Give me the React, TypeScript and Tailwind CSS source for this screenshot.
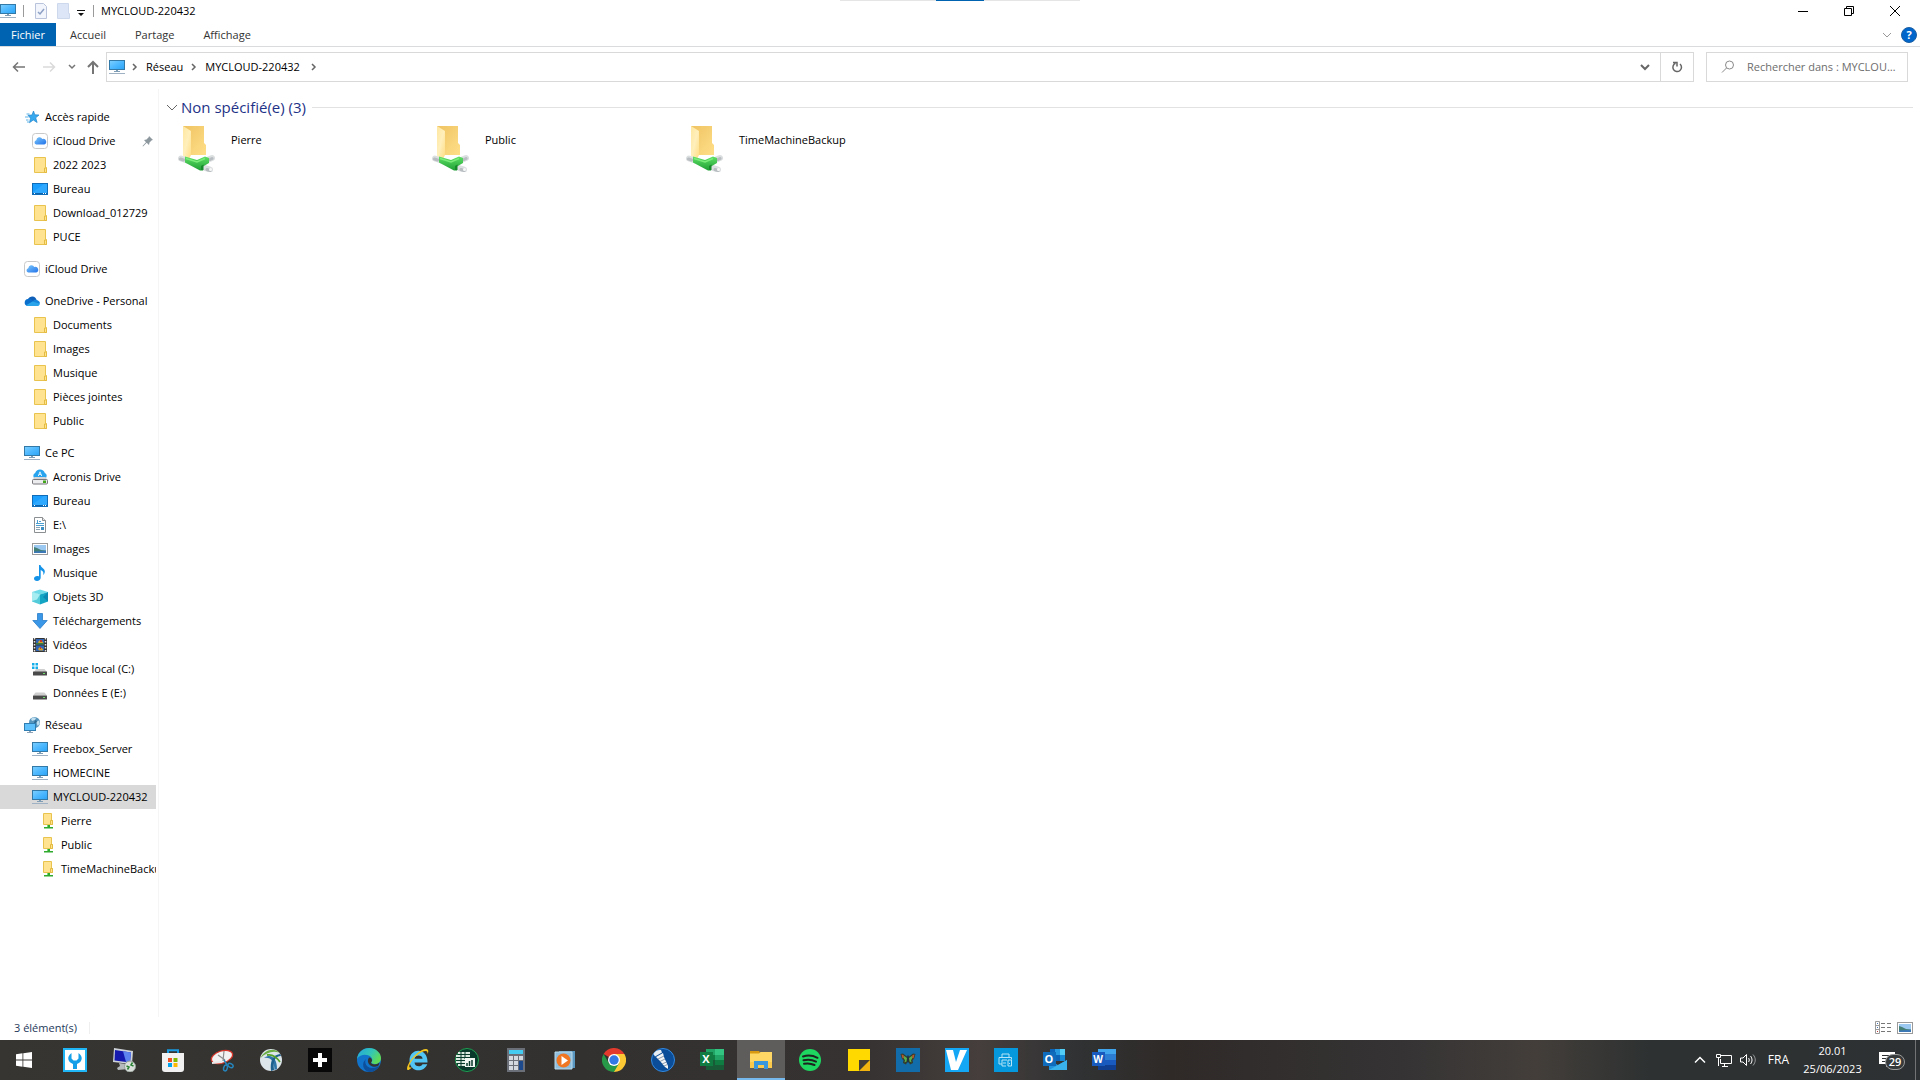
import React from 'react';

type IconProps = { className?: string };

/* ---------- Navigation pane icons ---------- */

const MonitorIcon = ({ className = 'w-4 h-4' }: IconProps) => (
  <svg className={className} viewBox="0 0 16 16" aria-hidden="true">
    <defs>
      <linearGradient id="screen" x1="0" y1="0" x2="1" y2="1">
        <stop offset="0" stopColor="#7fd0ff" />
        <stop offset=".5" stopColor="#4db8ff" />
        <stop offset="1" stopColor="#2aa3f5" />
      </linearGradient>
    </defs>
    <rect x=".5" y="1.5" width="15" height="9" fill="url(#screen)" stroke="#3279a8" />
    <path d="M7 11h2v1H7zM5 12h6v1H5z" fill="#7f9db5" />
    <path d="M0 14h16v1H0z" fill="#9fb2c4" />
  </svg>
);

const FolderIcon = ({ className = 'w-4 h-4' }: IconProps) => (
  <svg className={className} viewBox="0 0 16 16" aria-hidden="true">
    <path d="M2.500.5h11v10h1v5h-12z" fill="#ffe391" stroke="#e8c44f" />
    <path d="M12.500 15.500v-4.500h2v4.500z" fill="#ffe38d" stroke="#e3bb42" />
  </svg>
);

const StarIcon = ({ className = 'w-4 h-4' }: IconProps) => (
  <svg className={className} viewBox="0 0 16 16" aria-hidden="true">
    <path d="M9.500 2l1.300 3.800 4.200.2-3.300 2.800 1.400 4.700-3.800-2.500-3.800 2.700 1-4.500-2.500-2.900 4-.3z" fill="#37a9ef" stroke="#1f84cb" strokeWidth=".7" />
    <path d="M2.500 5h3M1 8h3.500M2 11h2.500M3 13h2" stroke="#4aa9e6" strokeWidth=".9" />
  </svg>
);

const ICloudIcon = ({ className = 'w-4 h-4' }: IconProps) => (
  <svg className={className} viewBox="0 0 16 16" aria-hidden="true">
    <defs>
      <linearGradient id="icloud" x1="0" y1="0" x2="1" y2="1">
        <stop offset="0" stopColor="#7cc8fb" />
        <stop offset="1" stopColor="#2272ea" />
      </linearGradient>
    </defs>
    <rect x=".5" y=".5" width="15" height="15" rx="3" fill="#fff" stroke="#c9c9c9" />
    <path d="M4.200 11.500a2.200 2.200 0 0 1 .1-4.300 3.200 3.200 0 0 1 6-1.300 2.800 2.800 0 0 1 1.900 5.600z" fill="url(#icloud)" />
  </svg>
);

const OneDriveIcon = ({ className = 'w-4 h-4' }: IconProps) => (
  <svg className={className} viewBox="0 0 16 16" aria-hidden="true">
    <path d="M4 6a4.600 4.600 0 0 1 8.500.8l-3 3z" fill="#0f5fb8" />
    <path d="M3.500 13A3.600 3.600 0 0 1 4 5.900c1.500-.3 3 .4 4.500 1.600L12 10z" fill="#0a6fcc" />
    <path d="M8.500 8.500c1-1.500 3-2.100 4.500-1.500 2 .7 3 2 3 3.500L12 12z" fill="#1686dc" />
    <path d="M2 12.300l6.500-3.800 7.300 2.200c0 1.400-1.200 2.300-2.800 2.300H3.500z" fill="#29a4ea" />
  </svg>
);

const DesktopIcon = ({ className = 'w-4 h-4' }: IconProps) => (
  <svg className={className} viewBox="0 0 16 16" aria-hidden="true">
    <rect x=".5" y="2.500" width="15" height="11" fill="#1a9fff" stroke="#0e6cb8" />
    <path d="M1 11l11-8h3v9H1z" fill="#3eafff" opacity=".6" />
    <path d="M1 12h14v1H1z" fill="#0c64ac" />
    <path d="M2 12h1v1H2zM11 12h1v1h-1zM13 12h1v1h-1z" fill="#fff" />
  </svg>
);

const AcronisIcon = ({ className = 'w-4 h-4' }: IconProps) => (
  <svg className={className} viewBox="0 0 16 16" aria-hidden="true">
    <path d="M3 9.500A3 3 0 0 1 3.200 4a5 5 0 0 1 9.600 0 3 3 0 0 1 .2 5.500z" fill="#28a3ee" />
    <path d="M6.300 7L8 2.800 9.700 7M7 5.500h2" stroke="#d9f2ff" fill="none" strokeWidth="1" />
    <path d="M2.500 8h11l2 3H.5z" fill="#d5d5d8" />
    <rect x=".5" y="10.500" width="15" height="4.500" rx="1" fill="#ececee" stroke="#77777c" />
    <rect x="11" y="11.500" width="3" height="2.500" fill="#43a51b" />
  </svg>
);

const DocumentIcon = ({ className = 'w-4 h-4' }: IconProps) => (
  <svg className={className} viewBox="0 0 16 16" aria-hidden="true">
    <path d="M2.500.5h8l3 3v12h-11z" fill="#fff" stroke="#8b8f92" />
    <path d="M10.500.5v3h3" fill="#e6e6e6" stroke="#8b8f92" />
    <path d="M4 6.500h8M4 8.500h8M7 4.500h2M5.500 3v4" stroke="#4a9fd0" />
    <path d="M4 10.500h4M4 12.500h4" stroke="#8aa4b5" />
    <path d="M9 10h3v3H9z" fill="#3c8fc2" />
  </svg>
);

const PictureIcon = ({ className = 'w-4 h-4' }: IconProps) => (
  <svg className={className} viewBox="0 0 16 16" aria-hidden="true">
    <rect x=".5" y="2.500" width="15" height="11" fill="#fff" stroke="#9a9a9a" />
    <path d="M2 4h12v8H2z" fill="#9bc8f0" />
    <path d="M2 6l3 1 4 2 5 .5V12H2z" fill="#447f77" />
    <path d="M2 10.500l12-.8V12H2z" fill="#3b78b5" />
  </svg>
);

const MusicIcon = ({ className = 'w-4 h-4' }: IconProps) => (
  <svg className={className} viewBox="0 0 16 16" aria-hidden="true">
    <path d="M7 0h1.500c.2 2.500 4.800 3.500 4.300 7-.2 1.600-1 2.500-1.800 3 1-2.300.3-4-2.300-5v7.500C8.700 14.500 7 16 5 16s-3-1-3-2.500S3.500 11 5.200 11c.8 0 1.300.1 1.800.4z" fill="#1493e8" />
  </svg>
);

const CubeIcon = ({ className = 'w-4 h-4' }: IconProps) => (
  <svg className={className} viewBox="0 0 16 16" aria-hidden="true">
    <path d="M0 3l8-2.500L16 3 8 5.500z" fill="#6fdbe8" />
    <path d="M0 3l8 2.500v10L0 12.500z" fill="#54cbd9" />
    <path d="M0 3l8 2.500-3 5L0 12z" fill="#a6edf2" />
    <path d="M16 3L8 5.500v10l8-3z" fill="#14a5c4" />
    <path d="M16 3v9.500L11 8z" fill="#0d88b2" />
  </svg>
);

const DownloadIcon = ({ className = 'w-4 h-4' }: IconProps) => (
  <svg className={className} viewBox="0 0 16 16" aria-hidden="true">
    <path d="M5.500.5h5v7h4.700L8 15.500.8 7.500h4.700z" fill="#3a97e8" stroke="#2a7cc8" strokeWidth=".8" />
  </svg>
);

const VideoIcon = ({ className = 'w-4 h-4' }: IconProps) => (
  <svg className={className} viewBox="0 0 16 16" aria-hidden="true">
    <path d="M1 1h14v14H1z" fill="#343434" />
    <path d="M2.500 1v14M13.500 1v14" stroke="#e6e6e6" strokeWidth="1.500" strokeDasharray="1.500 1.500" />
    <path d="M4 2h8v5.500H4zM4 8.500h8V14H4z" fill="#2f65b4" />
    <path d="M6 5l2-2 3 2v2H7zM6 12l2-2 3 2v1.500H7z" fill="#d4a32c" />
    <path d="M8 3h2v2H8zM8 10h1v2H8z" fill="#c6382a" />
    <path d="M4 6h8v1.500H4z" fill="#3f7d3a" />
  </svg>
);

const DriveIcon = ({ className = 'w-4 h-4' }: IconProps) => (
  <svg className={className} viewBox="0 0 16 16" aria-hidden="true">
    <path d="M3.500 7.500h9l2.500 3H1z" fill="#cfcfcf" />
    <rect x="1" y="10.500" width="14" height="4" rx=".5" fill="#4a4a4a" />
    <path d="M11 12h2v1h-2z" fill="#6fe06b" />
  </svg>
);

const SystemDriveIcon = ({ className = 'w-4 h-4' }: IconProps) => (
  <svg className={className} viewBox="0 0 16 16" aria-hidden="true">
    <path d="M4 8h8.500l2.500 3H2z" fill="#cfcfcf" />
    <rect x="1" y="10.500" width="14" height="4" rx=".5" fill="#4a4a4a" />
    <path d="M11 12h2v1h-2z" fill="#6fe06b" />
    <path d="M0 2h2.500v2.500H0zM3.500 2H6v2.500H3.500zM0 5.500h2.500V8H0zM3.500 5.500H6V8H3.500z" fill="#15aeea" />
  </svg>
);

const NetworkIcon = ({ className = 'w-4 h-4' }: IconProps) => (
  <svg className={className} viewBox="0 0 16 16" aria-hidden="true">
    <circle cx="10.500" cy="5.500" r="5.500" fill="#5795bd" />
    <path d="M7 2c2-2 4-1.500 5-1l-1 2-3 1zM12 5l3-1.500.8 3-2 2.500z" fill="#c1dfef" />
    <path d="M11 3l2 1-1 3-2-1z" fill="#2f6992" />
    <rect x=".5" y="6.500" width="11" height="7" fill="#5ec1fb" stroke="#2f7db1" />
    <path d="M5 14h2v1H5zM3 15h6v1H3z" fill="#8ea4b6" />
  </svg>
);

const SharedFolderIcon = ({ className = 'w-4 h-4' }: IconProps) => (
  <svg className={className} viewBox="0 0 16 16" aria-hidden="true">
    <path d="M3.500.5h8v7h1v4h-9z" fill="#ffe391" stroke="#e8c44f" />
    <path d="M10.500 11.500v-4h2v4z" fill="#ffe38d" stroke="#e3bb42" />
    <path d="M7 12h3v2H7zM4 14h9v1.500H4z" fill="#2faa2f" />
    <path d="M7 12h1v2H7z" fill="#79d979" />
  </svg>
);

const PinIcon = () => (
  <svg className="w-3 h-3" viewBox="0 0 12 12" aria-hidden="true">
    <path d="M7 1l4 4-1.200.3L7.500 7.500 7 10 4.700 7.700 1 11.500l-.5-.5L4 7.200 2 5l2.500-.5L6.700 2.200z" fill="#8d979e" />
  </svg>
);

/* Share shown in the content area: open folder over a green network cable */
const ShareIcon = () => (
  <svg className="w-10 h-12 shrink-0" viewBox="0 0 40 48" aria-hidden="true">
    <defs>
      <linearGradient id="folderBack" x1="0" y1="0" x2="1" y2="1">
        <stop offset="0" stopColor="#efc362" />
        <stop offset="1" stopColor="#ffdf89" />
      </linearGradient>
      <linearGradient id="folderFront" x1="0" y1="0" x2="1" y2="1">
        <stop offset="0" stopColor="#ffe7a0" />
        <stop offset=".5" stopColor="#ffefbb" />
        <stop offset="1" stopColor="#ffdd84" />
      </linearGradient>
      <linearGradient id="cable" x1="0" y1="0" x2="0" y2="1">
        <stop offset="0" stopColor="#5fe065" />
        <stop offset="1" stopColor="#1f9f35" />
      </linearGradient>
    </defs>
    <path d="M5 2h21v17l2 2v10H8z" fill="url(#folderBack)" />
    <path d="M5 2l8 5v24l-2 4-6-3z" fill="url(#folderFront)" />
    <path d="M3 34.500l6 2M28 36.500l6-2.500M24 43l8 2.500" stroke="#dcdfe0" strokeWidth="6" strokeLinecap="round" />
    <path d="M2.500 35l3 1M32 35.500l2-1M29 45.500l3 1" stroke="#b7bdc0" strokeWidth="3" strokeLinecap="round" />
    <path d="M7 32.500l12 3.500 8-3.500 4 1.500v5l-6 3.500v4h-3L7 38.500z" fill="url(#cable)" />
    <path d="M8 34.500l11 3.500 8-3.500" stroke="#7bec7b" strokeWidth="1.500" fill="none" />
    <path d="M23 42l2.500-1.500v5.500H23z" fill="#178a2c" />
    <circle cx="32.500" cy="45.500" r="1.500" fill="#f8f8f8" />
  </svg>
);

/* ---------- Small line icons ---------- */

const Chevron = ({ d, className }: { d: string; className: string }) => (
  <svg className={className} viewBox="0 0 12 12" fill="none" stroke="currentColor" aria-hidden="true">
    <path d={d} />
  </svg>
);

const DOWN = 'M2 4l4 4 4-4';
const RIGHT = 'M4 3l3 3-3 3';

/* ---------- Taskbar icons ---------- */

const tile = 'w-6 h-6';

const taskbarApps: { name: string; active?: boolean; icon: React.ReactNode }[] = [
  {
    name: 'Assistance',
    icon: (
      <svg className={tile} viewBox="0 0 24 24">
        <rect x="1" y="1" width="22" height="22" fill="#fff" stroke="#20b5f5" strokeWidth="2" />
        <path d="M8.500 5c-5 3.500-4 9 1.500 11v5h4v-5c5.500-2 6.500-7.500 1.500-11v5.500l-2 2h-3l-2-2z" fill="#159fe8" />
      </svg>
    ),
  },
  {
    name: 'Bureau à distance',
    icon: (
      <svg className={tile} viewBox="0 0 24 24">
        <path d="M2 0l19 3-1 13-19-2z" fill="#cdd3d8" />
        <path d="M3 2l16 2.500-1 10L2.500 12.500z" fill="#1519ae" />
        <path d="M11 3.200l8 1.300-1 10-4-.5z" fill="#5d83ee" />
        <path d="M7 15l7 1v3l3 2-11 1-1-2 3-2z" fill="#b5bbbd" />
        <circle cx="18" cy="18.500" r="5.500" fill="#dadfdb" stroke="#969f99" />
        <path d="M14.500 18l2.500 1-1.500 2.500M21.500 18L19 17l1.500-2.500" stroke="#288232" strokeWidth="1.500" fill="none" />
      </svg>
    ),
  },
  {
    name: 'Microsoft Store',
    icon: (
      <svg className={tile} viewBox="0 0 24 24">
        <path d="M7 6V2.200h10V6" stroke="#1999df" strokeWidth="2" fill="none" />
        <path d="M1 5h22v16a3 3 0 0 1-3 3H4a3 3 0 0 1-3-3z" fill="#f1f1f1" />
        <path d="M7 10h4v4H7z" fill="#ef5024" />
        <path d="M12.500 10h4v4h-4z" fill="#7eb900" />
        <path d="M7 15h4v4H7z" fill="#00a3ee" />
        <path d="M12.500 15h4v4h-4z" fill="#ffb800" />
      </svg>
    ),
  },
  {
    name: 'Outil Capture',
    icon: (
      <svg className={tile} viewBox="0 0 24 24">
        <ellipse cx="12" cy="9" rx="11" ry="6" transform="rotate(-18 12 9)" fill="#f2f2f2" stroke="#d73529" strokeWidth="1.200" />
        <path d="M8 7l7 5M14 3l-1 10" stroke="#8d8d8d" strokeWidth="1.200" />
        <path d="M2 15l10-1" stroke="#e8e8e8" strokeWidth="2" />
        <ellipse cx="15.500" cy="20" rx="1.800" ry="3" fill="none" stroke="#2585bd" strokeWidth="1.500" transform="rotate(15 15.500 20)" />
        <ellipse cx="20.500" cy="17.500" rx="2.800" ry="1.800" fill="none" stroke="#2585bd" strokeWidth="1.500" transform="rotate(30 20.500 17.500)" />
        <path d="M14 12l3 5" stroke="#2585bd" strokeWidth="1.500" />
      </svg>
    ),
  },
  {
    name: 'AnyConnect',
    icon: (
      <svg className={tile} viewBox="0 0 24 24">
        <circle cx="12" cy="12" r="11" fill="#dce5e9" />
        <path d="M1.500 10C5 2 15-1 20 4.500c-7-2-13 .5-18.500 5.500z" fill="#6bad44" />
        <path d="M5 10c7-5 13 0 13 11l-2.500 1C15 13 12 9 5 10z" fill="#2e75a8" />
        <path d="M22 8c-6 0-8 5-7 14l-3 1c-1-9 1-16 9-17z" fill="#1d628f" />
        <path d="M8 7c5-1 9 1 13 7" stroke="#54a22c" strokeWidth="1.800" fill="none" />
      </svg>
    ),
  },
  {
    name: 'Plus',
    icon: (
      <svg className={tile} viewBox="0 0 24 24">
        <path d="M0 0h24v24H0z" fill="#080808" />
        <path d="M10 5h4v5h5v4h-5v5h-4v-5H5v-4h5z" fill="#fff" />
      </svg>
    ),
  },
  {
    name: 'Microsoft Edge',
    icon: (
      <svg className={tile} viewBox="0 0 24 24">
        <defs>
          <linearGradient id="edgeTop" x1="0" y1="0" x2="1" y2=".5">
            <stop offset="0" stopColor="#23a4dd" />
            <stop offset=".6" stopColor="#34c6b5" />
            <stop offset="1" stopColor="#5edb58" />
          </linearGradient>
        </defs>
        <circle cx="12" cy="12" r="12" fill="#1273cb" />
        <path d="M0 11C1 4 6 0 12 0c7 0 12 5 12 10 0 4-3 6-6 6-3 0-4-1-3.500-2 .8-1 1-2 .5-3.500C13.500 6.500 4 4.500 0 11z" fill="url(#edgeTop)" />
        <path d="M9 11c-2 3 0 9 6 9 3 0 5-1 7-2-2 4-6 6-10 6-6-1-8-9-3-13z" fill="#0d4f9a" />
        <path d="M12 9.500c2 0 3 1.500 3 3 0 1-1 1.500-1 2.500 1.500 2 6 2 8.500-.5-.5 2-.5 2.500-1.500 3.500-4 2-9 0-10-4-.3-1.500 0-3 1-4.500z" fill="#343332" />
      </svg>
    ),
  },
  {
    name: 'Internet Explorer',
    icon: (
      <svg className={tile} viewBox="0 0 24 24">
        <path d="M21.500 14.500H8.500c.3 4.500 6.500 5 8 1.700h4.800C17 26 3.500 23.500 3.500 12.500 3.500-.5 22-1 21.500 14.500zM8.600 10.700h8c-.3-4-7.400-4.200-8 0z" fill="#53c5f5" />
        <path d="M6 19C1 25 0 21 2 17 6 8 15 1 20 1c3 0 2.500 3 1.500 5 0-2 0-3-2-3C15 3 6 10 3.500 17c-.8 3 .5 3 2.500 2z" fill="#f4c51e" />
      </svg>
    ),
  },
  {
    name: 'Tableur',
    icon: (
      <svg className={tile} viewBox="0 0 24 24">
        <circle cx="12" cy="12" r="11.500" fill="#08392b" stroke="#20a052" />
        <path d="M3 4h12v2H3zM1 7h14v2H1zM1 10h9v2H1zM1 13h9v2H1zM3 16h7v2H3z" fill="#dce9e1" />
        <path d="M6 3v15M10 3v8" stroke="#08392b" />
        <path d="M10 10h10v9H10z" fill="#f2f7f4" />
        <path d="M12 18v-3M14.500 18v-5M17 18v-6" stroke="#08392b" strokeWidth="1.500" />
      </svg>
    ),
  },
  {
    name: 'Calculatrice',
    icon: (
      <svg className={tile} viewBox="0 0 24 24">
        <path d="M3 0h18v24H3z" fill="#6b7078" />
        <path d="M5 2h14v4H5z" fill="#45cbf0" />
        <path d="M5 8h4v4H5zM10 8h4v4h-4zM15 8h4v4h-4zM5 13h4v4H5zM10 13h4v4h-4zM5 18h4v4H5zM10 18h4v4h-4z" fill="#d4d9df" />
        <path d="M15 13h4v9h-4z" fill="#1d4a8c" />
      </svg>
    ),
  },
  {
    name: 'Lecteur multimédia',
    icon: (
      <svg className={tile} viewBox="0 0 24 24">
        <path d="M6 3h16v17H6z" fill="#5a97c0" />
        <path d="M2 4h17v17H2z" fill="#8fbfdc" stroke="#b9daeb" />
        <circle cx="10.500" cy="12.500" r="7" fill="#ef7623" />
        <path d="M8.500 8v9l6.500-4.500z" fill="#fff" />
      </svg>
    ),
  },
  {
    name: 'Google Chrome',
    icon: (
      <svg className={tile} viewBox="0 0 24 24">
        <path d="M12 12L1.600 6A12 12 0 0 1 22.400 6z" fill="#e23b2e" />
        <path d="M12 12V6h10.400A12 12 0 0 1 12 24z" fill="#fcc934" />
        <path d="M1.600 6l5.200 9 5.200 3 5.200-3L12 24A12 12 0 0 1 1.600 6z" fill="#279847" />
        <circle cx="12" cy="12" r="6" fill="#fff" />
        <circle cx="12" cy="12" r="4.700" fill="#3478e5" />
      </svg>
    ),
  },
  {
    name: 'Vis',
    icon: (
      <svg className={tile} viewBox="0 0 24 24">
        <circle cx="12" cy="12" r="11.500" fill="#0b4d99" stroke="#338ae1" />
        <path d="M2.500 6C4 3 7 1.500 10 2l1 2.500-7 4z" fill="#e9eef3" />
        <path d="M5 9l7-4 1 4 4 9v3l-3-2-5-6z" fill="#f3f5f7" />
        <path d="M7 11l6-3M9 13.500l5-2.500M11 16l4.500-2M13 18l3.500-1.500" stroke="#6e8299" strokeWidth=".8" />
      </svg>
    ),
  },
  {
    name: 'Excel',
    icon: (
      <svg className={tile} viewBox="0 0 24 24">
        <path d="M6 1h9v6H6z" fill="#21a366" />
        <path d="M15 1h9v6h-9z" fill="#33c481" />
        <path d="M6 7h9v5H6z" fill="#107c41" />
        <path d="M15 7h9v5h-9z" fill="#21a366" />
        <path d="M6 12h18v10H6z" fill="#185c37" />
        <path d="M15 12h9v5h-9z" fill="#107c41" />
        <rect y="4" width="13" height="14" fill="#107c41" />
        <text x="6" y="15" textAnchor="middle" fontFamily="Open Sans" fontWeight="700" fontSize="11" fill="#fff">X</text>
      </svg>
    ),
  },
  {
    name: 'Explorateur de fichiers',
    active: true,
    icon: (
      <svg className={tile} viewBox="0 0 24 24">
        <path d="M1 3h9l1 1.500V7H1z" fill="#d99a11" />
        <path d="M1 5.500h9l1.500-1.500H23v16H1z" fill="#ffd765" />
        <path d="M1 14h22v6H1z" fill="#fbc94c" />
        <path d="M5 21v-8h14v8h-4v-4H9v4z" fill="#3a97dc" />
      </svg>
    ),
  },
  {
    name: 'Spotify',
    icon: (
      <svg className={tile} viewBox="0 0 24 24">
        <circle cx="12" cy="12" r="11" fill="#1ed760" />
        <path d="M5 8.500c5-1.500 10-1 14.500 1.300M5.500 12.300c4.500-1.200 8.500-.8 12.500 1.300M6 15.800c4-.9 7-.5 10.500 1.200" stroke="#1d2420" strokeWidth="2" strokeLinecap="round" fill="none" />
      </svg>
    ),
  },
  {
    name: 'Pense-bêtes',
    icon: (
      <svg className={tile} viewBox="0 0 24 24">
        <path d="M1 1h22v22H1z" fill="#ffd900" />
        <path d="M23 12v11H12z" fill="#f3b40f" />
        <path d="M12 12h11L12 23z" fill="#453d35" />
      </svg>
    ),
  },
  {
    name: 'Papillon',
    icon: (
      <svg className={tile} viewBox="0 0 24 24">
        <path d="M0 0h24v24H0z" fill="#126caa" />
        <path d="M11.500 9L7 5.500 4.500 6l1.500 5 1.500 1L7 15l3 1.500 1.500-3zM12.500 9L17 5.500l2.500.5-1.500 5-1.500 1 .5 3-3 1.500-1.500-3z" fill="#353a2a" />
        <path d="M11 10L7.500 7.500 8 11l1 1-.5 2.500 2-1zM13 10l3.500-2.500L16 11l-1 1 .5 2.500-2-1z" fill="#59ae49" />
        <path d="M5.500 6.500l2 .5.500 3-1.500.5zM18.500 6.500l-2 .5-.5 3 1.500.5z" fill="#b5582f" />
        <path d="M12 7.500v7" stroke="#1f2022" strokeWidth="1.200" />
      </svg>
    ),
  },
  {
    name: 'Vidéo',
    icon: (
      <svg className={tile} viewBox="0 0 24 24">
        <path d="M0 0h24v24H0z" fill="#14a7f5" />
        <path d="M1 2h7l3 12 4-12h7l-9 20H6z" fill="#fff" />
      </svg>
    ),
  },
  {
    name: 'Imprimante',
    icon: (
      <svg className={tile} viewBox="0 0 24 24">
        <path d="M0 0h24v24H0z" fill="#0698dc" />
        <path d="M8 9V6h7v3M8 16H5V9.500h12.500v2M8 12h5M8 12v6h4M9 15h3M14 12h3.500v6H14zM15.500 15v1" stroke="#b5e4f8" fill="none" />
      </svg>
    ),
  },
  {
    name: 'Outlook',
    icon: (
      <svg className={tile} viewBox="0 0 24 24">
        <path d="M7 1h15v12H7z" fill="#0c64b8" />
        <path d="M12 1h5v6h-5z" fill="#2799df" />
        <path d="M17 1h5v6h-5z" fill="#51cdf6" />
        <path d="M17 7h5v6h-5z" fill="#1689d4" />
        <path d="M6 12l9 5 9-5v10H6z" fill="#1e93dc" />
        <path d="M6 22l18-10v10z" fill="#39b2ec" />
        <rect y="4" width="13" height="14" fill="#0f6cbd" />
        <text x="6" y="15" textAnchor="middle" fontFamily="Open Sans" fontWeight="700" fontSize="11" fill="#fff">O</text>
      </svg>
    ),
  },
  {
    name: 'Word',
    icon: (
      <svg className={tile} viewBox="0 0 24 24">
        <path d="M6 1h18v5H6z" fill="#41a5ee" />
        <path d="M6 6h18v6H6z" fill="#2b7cd3" />
        <path d="M6 12h18v5H6z" fill="#185abd" />
        <path d="M6 17h18v5H6z" fill="#103f91" />
        <rect y="4" width="13" height="14" fill="#185abd" />
        <text x="6" y="15" textAnchor="middle" fontFamily="Open Sans" fontWeight="700" fontSize="10" fill="#fff">W</text>
      </svg>
    ),
  },
];

/* ---------- Data ---------- */

type NavItem = { label: string; icon: React.FC<IconProps>; level?: 1 | 2 | 3; pinned?: boolean; selected?: boolean };

const navGroups: NavItem[][] = [
  [
    { label: 'Accès rapide', icon: StarIcon, level: 1 },
    { label: 'iCloud Drive', icon: ICloudIcon, pinned: true },
    { label: '2022 2023', icon: FolderIcon },
    { label: 'Bureau', icon: DesktopIcon },
    { label: 'Download_012729', icon: FolderIcon },
    { label: 'PUCE', icon: FolderIcon },
  ],
  [{ label: 'iCloud Drive', icon: ICloudIcon, level: 1 }],
  [
    { label: 'OneDrive - Personal', icon: OneDriveIcon, level: 1 },
    { label: 'Documents', icon: FolderIcon },
    { label: 'Images', icon: FolderIcon },
    { label: 'Musique', icon: FolderIcon },
    { label: 'Pièces jointes', icon: FolderIcon },
    { label: 'Public', icon: FolderIcon },
  ],
  [
    { label: 'Ce PC', icon: MonitorIcon, level: 1 },
    { label: 'Acronis Drive', icon: AcronisIcon },
    { label: 'Bureau', icon: DesktopIcon },
    { label: 'E:\\', icon: DocumentIcon },
    { label: 'Images', icon: PictureIcon },
    { label: 'Musique', icon: MusicIcon },
    { label: 'Objets 3D', icon: CubeIcon },
    { label: 'Téléchargements', icon: DownloadIcon },
    { label: 'Vidéos', icon: VideoIcon },
    { label: 'Disque local (C:)', icon: SystemDriveIcon },
    { label: 'Données E (E:)', icon: DriveIcon },
  ],
  [
    { label: 'Réseau', icon: NetworkIcon, level: 1 },
    { label: 'Freebox_Server', icon: MonitorIcon },
    { label: 'HOMECINE', icon: MonitorIcon },
    { label: 'MYCLOUD-220432', icon: MonitorIcon, selected: true },
    { label: 'Pierre', icon: SharedFolderIcon, level: 3 },
    { label: 'Public', icon: SharedFolderIcon, level: 3 },
    { label: 'TimeMachineBackup', icon: SharedFolderIcon, level: 3 },
  ],
];

const indent = { 1: 'pl-6', 2: 'pl-8', 3: 'pl-10' };

const shares = ['Pierre', 'Public', 'TimeMachineBackup'];

/* ---------- Window parts ---------- */

function TitleBar() {
  return (
    <header className="relative flex items-center h-[23px] pb-0.5 pr-[19px]">
      {/* Snap handle on the top edge */}
      <div className="absolute top-0 left-1/2 -translate-x-1/2 w-60 h-px bg-[#e5e5e5] flex justify-center">
        <div className="w-12 h-px bg-[#0063b1]" />
      </div>
      <MonitorIcon />
      <span className="w-px h-3 ml-[7px] bg-[#9a9a9a]" />
      <button aria-label="Propriétés" className="ml-[11px]">
        <svg className="w-3 h-4" viewBox="0 0 12 16">
          <path d="M.5.5h8l3 3v12H.5z" fill="#f2f5fb" stroke="#b9c4dc" />
          <path d="M3 9l2 2 4-5" fill="none" stroke="#8c9fc5" strokeWidth="1.500" />
        </svg>
      </button>
      <button aria-label="Nouveau dossier" className="ml-2.5">
        <svg className="w-[13px] h-4" viewBox="0 0 13 16">
          <path d="M.5.5h11v10h1v5H.5z" fill="#dde6f6" stroke="#cdd8ec" />
        </svg>
      </button>
      <button aria-label="Personnaliser la barre d'outils" className="ml-[7px] pt-1">
        <svg className="w-2 h-2" viewBox="0 0 8 8">
          <path d="M0 1h8v1H0zM1 4h6L4 7z" fill="#111" />
        </svg>
      </button>
      <span className="w-px h-3 ml-2 bg-[#9a9a9a]" />
      <h1 className="ml-[7px]">MYCLOUD-220432</h1>
      <div className="ml-auto flex items-center gap-[34px] text-black">
        <button aria-label="Réduire">
          <svg className="w-3 h-3" viewBox="0 0 12 12"><path d="M1 6h10v1H1z" fill="currentColor" /></svg>
        </button>
        <button aria-label="Restaurer">
          <svg className="w-3 h-3" viewBox="0 0 12 12" fill="none" stroke="currentColor">
            <path d="M1.500 3.500h7v7h-7zM3.500 3V1.500h7v7H9" />
          </svg>
        </button>
        <button aria-label="Fermer">
          <svg className="w-3 h-3" viewBox="0 0 12 12" fill="none" stroke="currentColor"><path d="M1 1l10 10M11 1L1 11" /></svg>
        </button>
      </div>
    </header>
  );
}

function Ribbon() {
  return (
    <div className="flex items-center h-6 border-b border-[#dadbdc] text-[#333]">
      <button className="self-stretch w-14 bg-[#0063b1] text-white">Fichier</button>
      <button className="ml-3.5">Accueil</button>
      <button className="ml-[29px]">Partage</button>
      <button className="ml-[29px]">Affichage</button>
      <div className="ml-auto flex items-center gap-2 pr-[3px]">
        <button aria-label="Développer le ruban" className="text-[#999]">
          <Chevron d={DOWN} className="w-3 h-3" />
        </button>
        <button aria-label="Aide" className="w-4 h-4 rounded-full bg-[#0066cc] border border-[#1c5fa3] text-white font-bold text-[11px] leading-3 flex items-center justify-center">
          ?
        </button>
      </div>
    </div>
  );
}

function AddressRow() {
  return (
    <div className="flex items-center h-[30px] mt-[5px] pr-3">
      <nav className="flex items-center w-[106px] shrink-0 pl-3 text-[#757575]" aria-label="Historique">
        <button aria-label="Précédent">
          <svg className="w-3.5 h-3.5" viewBox="0 0 14 14" fill="none" stroke="currentColor" strokeWidth="1.500"><path d="M13 7H1.500M6 2.500L1.500 7 6 11.500" /></svg>
        </button>
        <button aria-label="Suivant" className="ml-4 text-[#dadada]">
          <svg className="w-3.5 h-3.5" viewBox="0 0 14 14" fill="none" stroke="currentColor" strokeWidth="1.500"><path d="M1 7h11.500M8 2.500L12.500 7 8 11.500" /></svg>
        </button>
        <button aria-label="Emplacements récents" className="ml-2.5">
          <Chevron d="M3 4l3 3 3-3" className="w-3 h-3 stroke-[1.5]" />
        </button>
        <button aria-label="Dossier parent" className="ml-2">
          <svg className="w-3.5 h-3.5" viewBox="0 0 14 14" fill="none" stroke="currentColor" strokeWidth="2"><path d="M7 14V2M2 7l5-5 5 5" /></svg>
        </button>
      </nav>
      <div className="flex flex-1 items-center h-full border border-[#d9d9d9] pl-0.5">
        <MonitorIcon />
        <Chevron d={RIGHT} className="w-3 h-3 ml-1 text-[#666] stroke-[1.5]" />
        <button className="ml-[5px]">Réseau</button>
        <Chevron d={RIGHT} className="w-3 h-3 ml-[5px] text-[#666] stroke-[1.5]" />
        <button className="ml-[5px]">MYCLOUD-220432</button>
        <Chevron d={RIGHT} className="w-3 h-3 ml-2 text-[#666] stroke-[1.5]" />
        <button aria-label="Emplacements précédents" className="ml-auto mr-[9px] text-[#666]">
          <Chevron d="M2 4l4 4 4-4" className="w-3 h-3 stroke-2" />
        </button>
        <button aria-label="Actualiser" className="w-[33px] self-stretch border-l border-[#d9d9d9] flex items-center justify-center text-[#666]">
          <svg className="w-3 h-3" viewBox="0 0 12 12" fill="none" stroke="currentColor" strokeWidth="1.500">
            <path d="M9 3a4.300 4.300 0 1 1-4.500-.7M2 1.500h4v4" />
          </svg>
        </button>
      </div>
      <label className="flex items-center w-[202px] h-full ml-3 pl-3.5 pr-1.5 border border-[#d9d9d9]">
        <svg className="w-3.5 h-3.5 shrink-0" viewBox="0 0 14 14" fill="none" stroke="#8a8a8a" aria-hidden="true">
          <circle cx="8.500" cy="5" r="4" />
          <path d="M5.500 8L1 12.500" />
        </svg>
        <input
          type="text"
          aria-label="Rechercher"
          placeholder="Rechercher dans : MYCLOUD-220432"
          className="flex-1 min-w-0 ml-3 outline-none text-ellipsis text-[11px] placeholder:text-[#6d6d6d]"
        />
      </label>
    </div>
  );
}

function Sidebar() {
  return (
    <nav className="w-[159px] shrink-0 border-r border-[#f5f5f5] pt-4 space-y-2" aria-label="Volet de navigation">
      {navGroups.map((group, i) => (
        <ul key={i}>
          {group.map(({ label, icon: Icon, level = 2, pinned, selected }) => (
            <li key={label} className="pr-0.5">
              <a href="#" className={`flex items-center h-6 overflow-hidden ${indent[level]} ${selected ? 'bg-[#d9d9d9]' : ''}`}>
                <Icon className="w-4 h-4 shrink-0" />
                <span className="ml-[5px] whitespace-nowrap">{label}</span>
                {pinned && <span className="ml-auto mr-0.5"><PinIcon /></span>}
              </a>
            </li>
          ))}
        </ul>
      ))}
    </nav>
  );
}

function Content() {
  return (
    <main className="flex-1 pl-[7px] pr-[7px] pt-2">
      <div className="flex items-center h-5">
        <button className="flex items-center text-[#1e3287] text-[15px] leading-5">
          <Chevron d="M1 4l5 5 5-5" className="w-3 h-3 mr-[3px] text-[#666]" />
          Non spécifié(e) (3)
        </button>
        <hr className="flex-1 ml-1.5 border-[#e2e2e2]" />
      </div>
      <ul className="flex flex-wrap pl-3 pt-[7px]">
        {shares.map((name) => (
          <li key={name} className="w-[254px]">
            <a href="#" className="flex items-start">
              <ShareIcon />
              <span className="ml-[13px] mt-2">{name}</span>
            </a>
          </li>
        ))}
      </ul>
    </main>
  );
}

function StatusBar() {
  return (
    <footer className="flex items-center h-[23px] pl-3.5 pr-[7px] pb-px">
      <span className="text-[#1e395b]">3 élément(s)</span>
      <span className="w-px h-3 ml-3 bg-[#efefef]" />
      <div className="ml-auto flex items-center gap-1.5">
        <button aria-label="Détails">
          <svg className="w-4 h-3.5" viewBox="0 0 16 14">
            <path d="M.5.5h4v12h-4zM.5 4.500h4M.5 8.500h4" fill="none" stroke="#9b9b9b" />
            <path d="M6 2h4v1H6zM12 2h4v1h-4zM6 6h4v1H6zM12 6h4v1h-4zM6 10h4v1H6zM12 10h4v1h-4z" fill="#777" />
            <path d="M2 2h1v1H2zM2 6h1v1H2z" fill="#4474b5" />
            <path d="M2 10h1v1H2z" fill="#c03a3a" />
          </svg>
        </button>
        <button aria-label="Grandes icônes">
          <PictureIcon />
        </button>
      </div>
    </footer>
  );
}

function Taskbar() {
  return (
    <div className="flex h-10 text-white bg-[linear-gradient(90deg,#373532_0%,#33312f_30%,#353231_45%,#453e3c_51%,#303233_56%,#2f2a28_61%,#353334_73%,#433e3a_80%,#2d3131_86%,#2e3133_100%)]">
      <button aria-label="Démarrer" className="w-12 flex items-center justify-center">
        <svg className="w-4 h-4" viewBox="0 0 16 16">
          <path d="M0 2.200L6.500 1.300v6.300H0zM7.300 1.200L16 0v7.600H7.300zM0 8.400h6.500v6.300L0 13.800zM7.300 8.400H16V16l-8.700-1.200z" fill="#fff" />
        </svg>
      </button>
      <div className="flex gap-px ml-[3px]">
        {taskbarApps.map((app) => (
          <button
            key={app.name}
            aria-label={app.name}
            className={`w-12 flex items-center justify-center ${app.active ? 'bg-[#5e5d5c] shadow-[inset_0_-2px_0_#76b9ed]' : ''}`}
          >
            {app.icon}
          </button>
        ))}
      </div>
      <div className="ml-auto flex items-center">
        <button aria-label="Afficher les icônes cachées">
          <Chevron d="M1 8.500l5-5 5 5" className="w-3 h-3 stroke-[1.5]" />
        </button>
        <button aria-label="Réseau" className="ml-2.5">
          <svg className="w-4 h-4" viewBox="0 0 16 16" fill="none" stroke="currentColor">
            <path d="M5 3.500h10.500v8H4.500V7M8.500 12v2M6 14.500h6M.5 2.500h4v3h-4zM2.500 6v8" />
          </svg>
        </button>
        <button aria-label="Volume" className="ml-2">
          <svg className="w-4 h-4" viewBox="0 0 16 16" fill="none" stroke="currentColor">
            <path d="M.5 6h2.500l3.500-3.500v11L3 10H.500zM8.500 6c1 1.200 1 2.800 0 4M10.500 4c2 2.500 2 5.500 0 8" />
            <path d="M13 2.500c3 3.500 3 7.500 0 11" opacity=".5" />
          </svg>
        </button>
        <button aria-label="Langue" className="ml-3 text-xs">FRA</button>
        <button className="w-[59px] ml-3.5 leading-[18px] text-center">
          20.01<br />25/06/2023
        </button>
        <button aria-label="29 notifications" className="relative w-7 h-7 ml-[17px]">
          <svg className="w-4 h-4" viewBox="0 0 16 16">
            <path d="M0 0h16v12h-6l-3 3v-3H0z" fill="#fff" />
            <path d="M3 3.500h10M3 6.500h10M3 9.500h5" stroke="#2e3133" />
          </svg>
          <span className="absolute left-1.5 top-2 w-5 h-4 rounded-full bg-[#373a3b] border border-[#9a9a9a] text-[11px] leading-[14px] font-semibold text-center">29</span>
        </button>
        <button aria-label="Afficher le bureau" className="self-stretch w-[5px] ml-2 border-l border-[#717374]" />
      </div>
    </div>
  );
}

export default function App() {
  return (
    <div className="min-h-screen flex flex-col bg-white text-black text-[11px] leading-4 font-['Open_Sans','Noto_Sans',sans-serif]">
      <TitleBar />
      <Ribbon />
      <AddressRow />
      <div className="flex flex-1 mt-[7px]">
        <Sidebar />
        <Content />
      </div>
      <StatusBar />
      <Taskbar />
    </div>
  );
}
